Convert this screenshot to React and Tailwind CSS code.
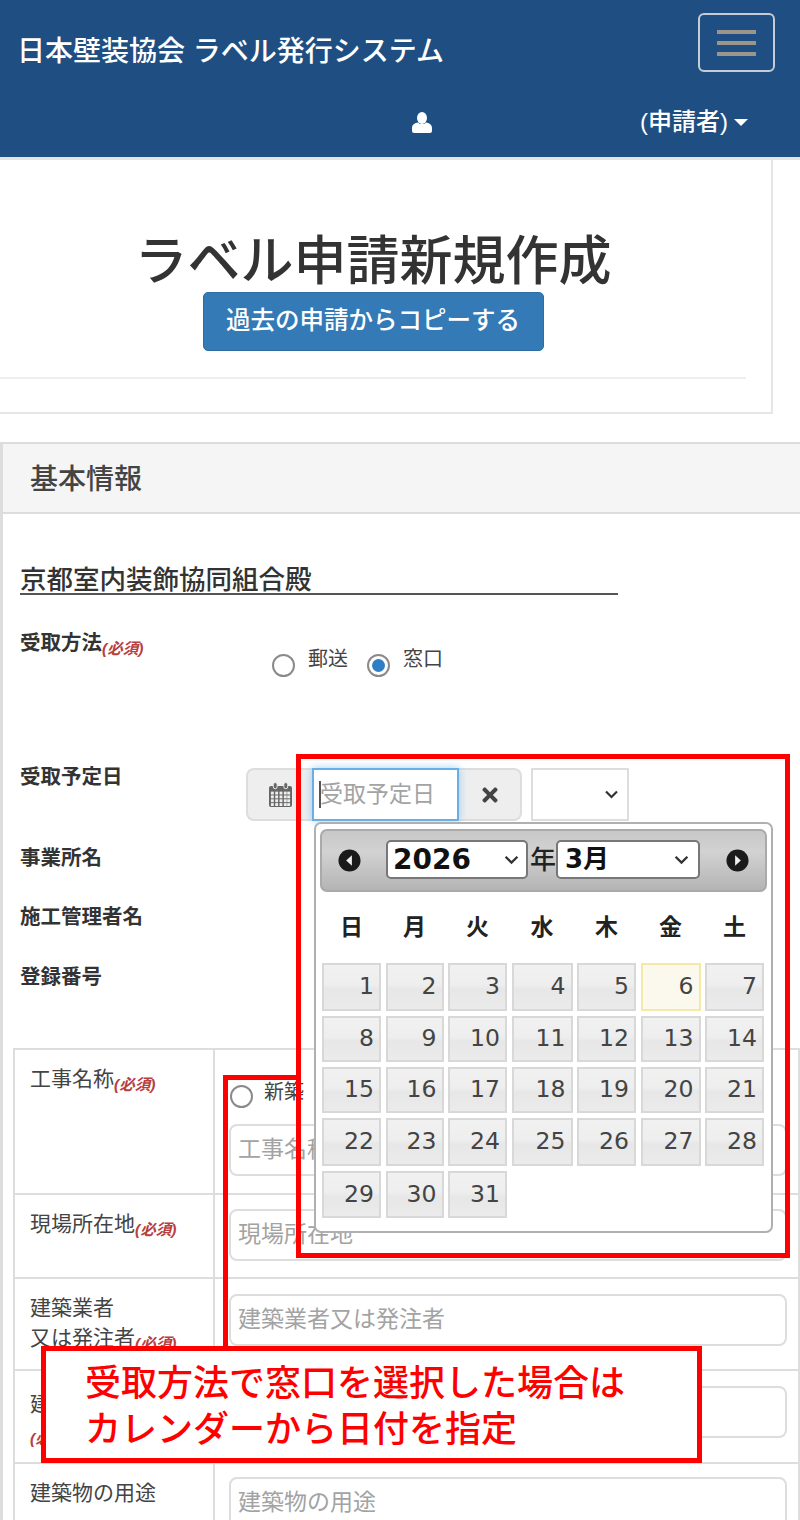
import React from "react";
import { FaTimes } from "react-icons/fa";

const Req = () => (
  <span className="text-[15.5px] font-bold italic text-[#b8403e] relative top-[4px]">(必須)</span>
);

const Chevron = ({ className }) => (
  <svg viewBox="0 0 14 9" className={className} fill="none" stroke="#333" strokeWidth="2.2">
    <path d="M1.5 1.5 L7 7 L12.5 1.5" />
  </svg>
);

const UserIcon = () => (
  <svg viewBox="0 0 20 21" className="w-[20px] h-[21px]" fill="#fff">
    <ellipse cx="10" cy="6" rx="5" ry="6" />
    <path d="M2 21 Q0 21 0 19 V16 C0 12.5 3 11 6 10.5 C7.5 12.5 12.5 12.5 14 10.5 C17 11 20 12.5 20 16 V19 Q20 21 18 21 Z" />
  </svg>
);

const CalendarIcon = () => (
  <svg viewBox="0 0 24 26" className="w-[23px] h-[25px]" fill="#666">
    <path d="M2 4h20a2 2 0 0 1 2 2v18a2 2 0 0 1-2 2H2a2 2 0 0 1-2-2V6a2 2 0 0 1 2-2z" />
    <rect x="4.5" y="0.5" width="4" height="6.5" rx="2" fill="#666" stroke="#eee" strokeWidth="1" />
    <rect x="15.5" y="0.5" width="4" height="6.5" rx="2" fill="#666" stroke="#eee" strokeWidth="1" />
    <g fill="#eee">
      {[2, 6.5, 11, 15.5, 19].map((x) =>
        [10, 14, 18, 22].map((y) => <rect key={x + "-" + y} x={x} y={y} width="3" height="3" />)
      )}
    </g>
  </svg>
);

const NavCircle = ({ dir }) => (
  <svg viewBox="0 0 24 24" className="w-[23px] h-[23px]">
    <circle cx="12" cy="12" r="11.5" fill="#1a1a1a" />
    <path d={dir === "l" ? "M14.5 6.5 L8.5 12 L14.5 17.5 Z" : "M9.5 6.5 L15.5 12 L9.5 17.5 Z"} fill="#eee" />
  </svg>
);

const Radio = ({ checked }) => (
  <span className="w-[23px] h-[23px] rounded-full border-2 border-[#8a8a8a] bg-white flex items-center justify-center shrink-0">
    {checked && <span className="w-[13px] h-[13px] rounded-full bg-[#2f7fc6]" />}
  </span>
);

const Field = ({ placeholder, className = "" }) => (
  <div className={`h-[52px] w-[558px] border-2 border-[#ddd] rounded-[8px] bg-white flex items-center pl-[7px] pb-[1px] text-[23px] text-[#a3a3a3] ${className}`}>
    {placeholder}
  </div>
);

const Row = ({ h, label, children, last }) => (
  <div className={`flex ${h} ${last ? "" : "border-b-2 border-[#ddd]"}`}>
    <div className="w-[200px] shrink-0 border-r-2 border-[#ddd] pl-[15px] pt-[14px] text-[21px] leading-[30px] text-[#444]">
      {label}
    </div>
    <div className="flex-1 pl-[14px] pt-[15px]">{children}</div>
  </div>
);

const cellBg =
  "bg-[linear-gradient(180deg,#f1f1f1_0%,#eeeeee_45%,#e7e7e7_55%,#ebebeb_100%)] border-2 border-[#d8d8d8]";

const days = Array.from({ length: 31 }, (_, i) => i + 1);

function Calendar() {
  return (
    <div className="absolute left-[314px] top-[822px] w-[459px] h-[411px] border-2 border-[#b0b0b0] rounded-[7px] bg-white px-[4px] pt-[5px]">
      <div className="h-[63px] border-2 border-[#aaa] rounded-[7px] bg-[linear-gradient(180deg,#c8c8c8_0%,#d2d2d2_35%,#b4b4b4_100%)] flex items-center pl-[16px]">
        <NavCircle dir="l" />
        <div className="ml-[25px] w-[142px] h-[39px] border-2 border-[#777] rounded-[5px] bg-white flex items-center justify-between pl-[5px] pr-[7px] text-[28px] font-bold font-['DejaVu_Sans','Noto_Sans_CJK_JP',sans-serif] text-[#111] mt-[-2px]">
          2026
          <Chevron className="w-[15px] h-[10px]" />
        </div>
        <span className="ml-[2px] text-[26px] leading-none text-[#222] font-medium mt-[-2px]">年</span>
        <div className="w-[144px] h-[39px] border-2 border-[#777] rounded-[5px] bg-white flex items-center justify-between pl-[7px] pr-[9px] text-[26px] font-bold font-['DejaVu_Sans','Noto_Sans_CJK_JP',sans-serif] text-[#111] mt-[-2px]">
          3月
          <Chevron className="w-[15px] h-[10px]" />
        </div>
        <span className="ml-[26px]">
          <NavCircle dir="r" />
        </span>
      </div>
      <div className="grid grid-cols-[59px_58px_59px_61px_59px_60px_59px] gap-x-[4.5px] ml-[2px] mt-[19px] h-[52px] text-[23px] font-bold text-[#222] text-center leading-[32px]">
        {["日", "月", "火", "水", "木", "金", "土"].map((d) => (
          <span key={d}>{d}</span>
        ))}
      </div>
      <div className="grid grid-cols-[59px_58px_59px_61px_59px_60px_59px] grid-rows-[48px_46px_46px_48px_47px] gap-x-[4.5px] gap-y-[5px] ml-[2px]">
        {days.map((d) => (
          <div
            key={d}
            className={`flex items-center justify-end pr-[5px] text-[23.5px] text-[#444] font-['DejaVu_Sans',sans-serif] ${
              d === 6 ? "bg-[#fbf9ee] border-2 border-[#f5e9a8]" : cellBg
            }`}
          >
            {d}
          </div>
        ))}
      </div>
    </div>
  );
}

export default function App() {
  return (
    <div className="relative w-[800px] h-[1520px] overflow-hidden bg-white text-[#333] [font-family:'Liberation_Sans','Noto_Sans_CJK_JP',sans-serif]">
      {/* Navbar */}
      <header className="h-[160px] bg-[#1f4f82] border-b-[3px] border-[#e4e4e4] text-white pt-[13px]">
        <div className="flex justify-between pl-[17px] pr-[25px]">
          <div className="pt-[21px] text-[28px] leading-[36px] font-medium">日本壁装協会 ラベル発行システム</div>
          <div className="w-[77px] h-[59px] border-2 border-[#c6ccd4] rounded-[6px] flex flex-col justify-center gap-[7px] items-center">
            <span className="block w-[39px] h-[4px] bg-[#9b9689]" />
            <span className="block w-[39px] h-[4px] bg-[#9b9689]" />
            <span className="block w-[39px] h-[4px] bg-[#9b9689]" />
          </div>
        </div>
        <div className="flex items-center pl-[412px] mt-[34px] h-[32px]">
          <UserIcon />
          <span className="ml-[208px] text-[24px] font-medium leading-[32px]">(申請者)</span>
          <span className="ml-[6px] mt-[1px] w-0 h-0 border-x-[7.5px] border-x-transparent border-t-[7.5px] border-t-white" />
        </div>
      </header>

      {/* Title card */}
      <section className="w-[773px] h-[254px] border-r-2 border-b-2 border-[#e6e6e6] pr-[25px] pt-[73px] flex flex-col items-center">
        <h1 className="text-[53px] leading-[57px] font-medium text-[#333]">ラベル申請新規作成</h1>
        <button className="mt-[2px] w-[341px] h-[59px] bg-[#337ab7] border border-[#2e6da4] rounded-[5px] text-white text-[24.5px] font-medium">
          過去の申請からコピーする
        </button>
        <hr className="mt-[26px] w-full border-t-2 border-[#eee]" />
      </section>

      {/* Panel */}
      <section className="mt-[28px] border-t-2 border-l-[3px] border-[#ddd] h-[1080px]">
        <div className="h-[70px] bg-[#f5f5f5] border-b-2 border-[#ddd] pl-[27px] pt-[3px] flex items-center text-[28px] font-medium text-[#444]">
          基本情報
        </div>
        <div className="pt-[43px]">
          <div className="pl-[17px]">
            <div className="w-[598px] h-[38px] pt-[5px] border-b-2 border-[#555] text-[26.5px] leading-[36px] font-medium text-[#333]">
              京都室内装飾協同組合殿
            </div>

            <div className="flex mt-[33px] h-[133px]">
              <div className="w-[226px] shrink-0 pt-[1px] text-[20.5px] leading-[28px] font-semibold text-[#333]">
                受取方法
                <Req />
              </div>
              <div className="flex pl-[26px] pt-[26px] text-[20px] text-[#444]">
                <Radio />
                <span className="ml-[13px] relative top-[-9px] leading-[28px]">郵送</span>
                <span className="ml-[19px]">
                  <Radio checked />
                </span>
                <span className="ml-[13px] relative top-[-9px] leading-[28px]">窓口</span>
              </div>
            </div>

            <div className="flex h-[81px]">
              <div className="w-[226px] shrink-0 pt-[2px] text-[20.5px] leading-[28px] font-semibold">受取予定日</div>
              <div className="flex mt-[7px] h-[53px]">
                <div className="w-[66px] bg-[#eee] border-2 border-r-0 border-[#ddd] rounded-l-[8px] flex items-center justify-center">
                  <CalendarIcon />
                </div>
                <div className="relative w-[147px] bg-white border-2 border-[#66afe9] shadow-[0_0_8px_rgba(102,175,233,0.6)] flex items-center pl-[6px] text-[23px] text-[#a3a3a3]">
                  <span className="absolute left-[5px] top-[11px] w-[1.5px] h-[27px] bg-[#555]" />
                  受取予定日
                </div>
                <div className="w-[63px] bg-[#eee] border-2 border-l-0 border-[#ddd] rounded-r-[8px] flex items-center justify-start pl-[21px]">
                  <FaTimes className="w-[20px] h-[22px] text-[#444]" />
                </div>
                <div className="ml-[9px] w-[98px] border-2 border-[#ddd] bg-white flex items-center justify-end pr-[8px]">
                  <Chevron className="w-[15px] h-[9px]" />
                </div>
              </div>
            </div>

            <div className="h-[59px] pt-[2px] text-[20.5px] leading-[28px] font-semibold">事業所名</div>
            <div className="h-[60px] pt-[2px] text-[20.5px] leading-[28px] font-semibold">施工管理者名</div>
            <div className="h-[87px] pt-[2px] text-[20.5px] leading-[28px] font-semibold">登録番号</div>
          </div>

          <div className="ml-[10px] border-t-2 border-l-2 border-r-2 border-[#ddd] w-[787px]">
            <Row
              h="h-[145px]"
              label={
                <>
                  工事名称
                  <Req />
                </>
              }
            >
              <div className="flex items-start h-[59px]">
                <span className="mt-[20px] ml-[1px]">
                  <Radio />
                </span>
                <span className="ml-[11px] mt-[13px] text-[20px] leading-[28px] text-[#444]">新築</span>
              </div>
              <Field placeholder="工事名称" />
            </Row>
            <Row
              h="h-[84px]"
              label={
                <>
                  現場所在地
                  <Req />
                </>
              }
            >
              <Field placeholder="現場所在地" className="-mt-[1px]" />
            </Row>
            <Row
              h="h-[92px]"
              label={
                <>
                  建築業者
                  <br />
                  又は発注者
                  <Req />
                </>
              }
            >
              <Field placeholder="建築業者又は発注者" />
            </Row>
            <Row
              h="h-[93px]"
              label={
                <>
                  <span className="relative top-[4px]">建</span>
                  <br />
                  <span className="relative top-[3px]">
                    <Req />
                  </span>
                </>
              }
            >
              <Field placeholder="" />
            </Row>
            <Row h="h-[90px]" label="建築物の用途" last>
              <Field placeholder="建築物の用途" className="-mt-[2px]" />
            </Row>
          </div>
        </div>
      </section>

      {/* Date picker popover */}
      <Calendar />

      {/* Red annotations over the screenshot */}
      <div className="absolute left-[296px] top-[754px] w-[494px] h-[504px] border-[5px] border-[#f00]" />
      <div className="absolute left-[223px] top-[1075px] w-[74px] h-[275px] border-l-[5px] border-t-[5px] border-[#f00]" />
      <div className="absolute left-[41px] top-[1346px] w-[661px] h-[117px] border-[5px] border-[#f00] bg-white pl-[39px] pt-[10px] text-[36px] leading-[46px] text-[#f00] font-medium">
        受取方法で窓口を選択した場合は
        <br />
        カレンダーから日付を指定
      </div>
    </div>
  );
}
